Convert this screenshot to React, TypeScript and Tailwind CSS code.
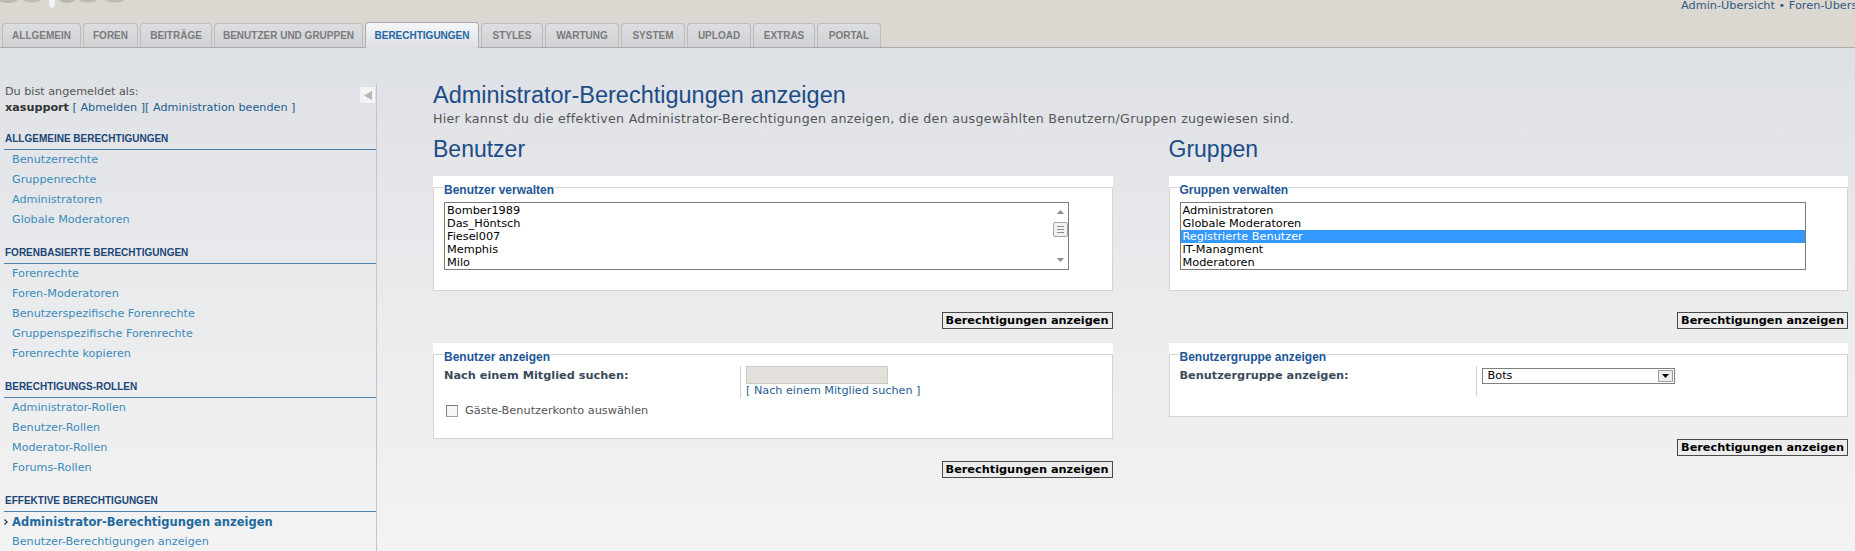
import React from "react";

const tabs: { label: string; w: string; active?: boolean }[] = [
  { label: "ALLGEMEIN", w: "w-[79px]" },
  { label: "FOREN", w: "w-[55px]" },
  { label: "BEITRÄGE", w: "w-[72px]" },
  { label: "BENUTZER UND GRUPPEN", w: "w-[149px]" },
  { label: "BERECHTIGUNGEN", w: "w-[114px]", active: true },
  { label: "STYLES", w: "w-[62px]" },
  { label: "WARTUNG", w: "w-[74px]" },
  { label: "SYSTEM", w: "w-[64px]" },
  { label: "UPLOAD", w: "w-[64px]" },
  { label: "EXTRAS", w: "w-[62px]" },
  { label: "PORTAL", w: "w-[64px]" },
];

const sections: { title: string; links: string[]; active?: number }[] = [
  {
    title: "ALLGEMEINE BERECHTIGUNGEN",
    links: ["Benutzerrechte", "Gruppenrechte", "Administratoren", "Globale Moderatoren"],
  },
  {
    title: "FORENBASIERTE BERECHTIGUNGEN",
    links: [
      "Forenrechte",
      "Foren-Moderatoren",
      "Benutzerspezifische Forenrechte",
      "Gruppenspezifische Forenrechte",
      "Forenrechte kopieren",
    ],
  },
  {
    title: "BERECHTIGUNGS-ROLLEN",
    links: ["Administrator-Rollen", "Benutzer-Rollen", "Moderator-Rollen", "Forums-Rollen"],
  },
  {
    title: "EFFEKTIVE BERECHTIGUNGEN",
    links: ["Administrator-Berechtigungen anzeigen", "Benutzer-Berechtigungen anzeigen"],
    active: 0,
  },
];

function Panel({ legend, children }: { legend: string; children: React.ReactNode }) {
  return (
    <div className="bg-white">
      <fieldset className="border border-[#d4d4d4] px-[10px] pb-[20px]">
        <legend className="pt-[6px] leading-[16px] text-[12px] font-bold text-[#1d5597] font-['Liberation_Sans',sans-serif]">
          {legend}
        </legend>
        {children}
      </fieldset>
    </div>
  );
}

function SubmitButton() {
  return (
    <div className="flex justify-end">
      <button className="h-[17px] px-[3px] border border-[#4a4a4a] bg-[#ececec] text-[11.3px] leading-[15px] font-bold text-black">
        Berechtigungen anzeigen
      </button>
    </div>
  );
}

function Scrollbar() {
  return (
    <div className="w-[16px] flex flex-col items-center py-px">
      <div className="h-[16px] w-full flex items-center justify-center">
        <svg width="7" height="4" viewBox="0 0 7 4">
          <path d="M0 4 L3.5 0 L7 4 Z" fill="#8c8c8c" />
        </svg>
      </div>
      <div className="mt-[2px] h-[15px] w-[15px] rounded-[2px] border border-[#a3a3a3] bg-[#f1f1f1] flex flex-col items-center justify-center gap-[2px]">
        <div className="h-px w-[7px] bg-[#8f8f8f]" />
        <div className="h-px w-[7px] bg-[#8f8f8f]" />
        <div className="h-px w-[7px] bg-[#8f8f8f]" />
      </div>
      <div className="flex-1" />
      <div className="h-[16px] w-full flex items-center justify-center">
        <svg width="7" height="4" viewBox="0 0 7 4">
          <path d="M0 0 L3.5 4 L7 0 Z" fill="#8c8c8c" />
        </svg>
      </div>
    </div>
  );
}

export default function App() {
  return (
    <div className="w-[1855px] h-[551px] overflow-hidden font-['DejaVu_Sans',sans-serif] text-[#333]">
      {/* Header */}
      <header className="h-[48px] bg-[#dbd8d1] border-b border-[#a9a9a9] flex flex-col">
        <div className="h-[23px] flex">
          <div className="w-[1681px] shrink-0">
            <svg width="130" height="10" viewBox="0 0 130 10">
              <ellipse cx="8" cy="-1" rx="10" ry="4" fill="#b9b7b1" />
              <ellipse cx="32" cy="-1" rx="9" ry="3.5" fill="#bdbbb5" />
              <path d="M49 0 L55 0 L55 6 Q52 10 49 6 Z" fill="#f2f3f5" />
              <ellipse cx="67" cy="-1" rx="8" ry="4" fill="#b9b7b1" />
              <ellipse cx="88" cy="-1" rx="9" ry="3.5" fill="#bcbab4" />
              <ellipse cx="115" cy="-1" rx="10" ry="3.5" fill="#bdbbb5" />
            </svg>
          </div>
          <div className="whitespace-nowrap text-[11.3px] leading-[12px] text-[#34587f]">
            Admin-Übersicht • Foren-Übersicht
          </div>
        </div>
        <nav className="h-[24px] flex items-end gap-[2px] pl-[2px] font-['Liberation_Sans',sans-serif] text-[10px] font-bold">
          {tabs.map((t) =>
            t.active ? (
              <div
                key={t.label}
                className={`${t.w} h-[26px] -mb-px relative flex items-center justify-center pb-px rounded-t-[4px] border border-b-0 border-[#abadb0] bg-linear-to-b from-[#f5f6f7] to-[#dde0e5] text-[#2467a3]`}
              >
                {t.label}
              </div>
            ) : (
              <div
                key={t.label}
                className={`${t.w} h-[24px] flex items-center justify-center rounded-t-[4px] border border-b-0 border-[#babcbf] bg-linear-to-b from-[#dcdee1] to-[#cfd1d5] text-[#7b7b7b]`}
              >
                {t.label}
              </div>
            )
          )}
        </nav>
      </header>

      {/* Body */}
      <div className="h-[503px] flex bg-linear-to-b from-[#dde0e5] via-[#e9eaec] via-45% to-[#f3f3f3]">
        {/* Sidebar */}
        <aside className="w-[377px] shrink-0 pt-[36px] flex flex-col">
          <div className="relative flex-1 border-r border-[#c3c5c8]">
            <div className="absolute right-px top-[3px] w-[15px] h-[16px] bg-[#f4f4f4] flex items-center justify-center">
              <svg width="8" height="9" viewBox="0 0 8 9">
                <path d="M8 0 L0 4.5 L8 9 Z" fill="#b4b4b4" />
              </svg>
            </div>
            <div className="px-[5px] text-[11.2px] leading-[16px] text-[#555]">
              <div>Du bist angemeldet als:</div>
              <div>
                <b className="text-[#333]">xasupport</b>{" "}
                <span className="text-[#1f5e8f]">[ Abmelden ]</span>
                <span className="text-[#1f5e8f]">[ Administration beenden ]</span>
              </div>
            </div>
            {sections.map((s) => (
              <div key={s.title} className="mt-[15px]">
                <div className="ml-[4px] pl-px pb-[2px] border-b border-[#4f80ad] leading-[16px] text-[10px] font-bold text-[#1b4677] font-['Liberation_Sans',sans-serif]">
                  {s.title}
                </div>
                {s.links.map((l, i) =>
                  s.active === i ? (
                    <div key={l} className="relative pl-[12px] leading-[20px] text-[11.5px] font-bold text-[#1f6a9e]">
                      <svg className="absolute left-[4px] top-[7px]" width="4" height="6" viewBox="0 0 4 6">
                        <path d="M0.5 0.5 L3.2 3 L0.5 5.5" stroke="#333" strokeWidth="1.2" fill="none" />
                      </svg>
                      {l}
                    </div>
                  ) : (
                    <div key={l} className="pl-[12px] leading-[20px] text-[11.2px] text-[#3b8bbb]">
                      {l}
                    </div>
                  )
                )}
              </div>
            ))}
          </div>
        </aside>

        {/* Main */}
        <main className="flex-1 pl-[56px] pr-[7px] pt-[34px]">
          <h1 className="font-['Liberation_Sans',sans-serif] text-[23.5px] leading-[26px] text-[#1b4c86]">
            Administrator-Berechtigungen anzeigen
          </h1>
          <p className="mt-[4px] text-[12.6px] leading-[14px] tracking-[0.3px] text-[#555]">
            Hier kannst du die effektiven Administrator-Berechtigungen anzeigen, die den ausgewählten Benutzern/Gruppen zugewiesen sind.
          </p>
          <div className="mt-[10px] grid grid-cols-2 gap-x-[56px]">
            {/* Benutzer */}
            <div className="flex flex-col">
              <h2 className="font-['Liberation_Sans',sans-serif] text-[23px] leading-[26px] text-[#1b4c86]">
                Benutzer
              </h2>
              <div className="mt-[14px]">
                <Panel legend="Benutzer verwalten">
                  <div className="mt-[4px] w-[625px] h-[68px] border border-[#7c7c7c] bg-white flex">
                    <div className="flex-1 pt-px text-[11.3px] leading-[13px] text-black">
                      {["Bomber1989", "Das_Höntsch", "Fiesel007", "Memphis", "Milo"].map((n) => (
                        <div key={n} className="pl-[2px]">
                          {n}
                        </div>
                      ))}
                    </div>
                    <Scrollbar />
                  </div>
                </Panel>
              </div>
              <div className="mt-[21px]">
                <SubmitButton />
              </div>
              <div className="mt-[14px]">
                <Panel legend="Benutzer anzeigen">
                  <div className="mt-px flex">
                    <div className="w-[296px] pt-[3px] leading-[14px] text-[11.3px] font-bold text-[#3b4a5c]">
                      Nach einem Mitglied suchen:
                    </div>
                    <div className="border-l border-[#d0d0d0] pl-[5px]">
                      <div className="w-[142px] h-[18px] bg-[#e3dfda] border border-[#cdc9c3]" />
                      <div className="leading-[14px] text-[11.2px] text-[#1f5e8f]">[ Nach einem Mitglied suchen ]</div>
                    </div>
                  </div>
                  <div className="mt-[6px] flex items-center gap-[7px] pl-[2px] h-[14px]">
                    <div className="w-[12px] h-[12px] border border-[#a5a5a5] border-t-[#7d7d7d] border-l-[#7d7d7d] bg-[#f7f7f7]" />
                    <span className="text-[11.3px] leading-[14px] text-[#555]">Gäste-Benutzerkonto auswählen</span>
                  </div>
                </Panel>
              </div>
              <div className="mt-[22px]">
                <SubmitButton />
              </div>
            </div>

            {/* Gruppen */}
            <div className="flex flex-col">
              <h2 className="font-['Liberation_Sans',sans-serif] text-[23px] leading-[26px] text-[#1b4c86]">
                Gruppen
              </h2>
              <div className="mt-[14px]">
                <Panel legend="Gruppen verwalten">
                  <div className="mt-[4px] w-[626px] h-[68px] border border-[#7c7c7c] bg-white pt-px text-[11.3px] leading-[13px] text-black">
                    {["Administratoren", "Globale Moderatoren", "Registrierte Benutzer", "IT-Managment", "Moderatoren"].map(
                      (n) =>
                        n === "Registrierte Benutzer" ? (
                          <div key={n} className="pl-[2px] bg-[#3399ff] text-white">
                            {n}
                          </div>
                        ) : (
                          <div key={n} className="pl-[2px]">
                            {n}
                          </div>
                        )
                    )}
                  </div>
                </Panel>
              </div>
              <div className="mt-[21px]">
                <SubmitButton />
              </div>
              <div className="mt-[14px]">
                <Panel legend="Benutzergruppe anzeigen">
                  <div className="mt-px flex">
                    <div className="w-[296px] pt-[3px] leading-[14px] text-[11.3px] font-bold text-[#3b4a5c]">
                      Benutzergruppe anzeigen:
                    </div>
                    <div className="h-[30px] border-l border-[#d0d0d0] pl-[5px]">
                      <div className="mt-[2px] w-[193px] h-[16px] border border-[#7f7f7f] bg-white flex items-center">
                        <span className="flex-1 pl-[5px] text-[11.3px] leading-[14px] text-black">Bots</span>
                        <div className="mr-px w-[15px] h-[12px] bg-[#ececec] border border-[#a0a0a0] flex items-center justify-center">
                          <svg width="7" height="4" viewBox="0 0 7 4">
                            <path d="M0 0 L3.5 4 L7 0 Z" fill="#000" />
                          </svg>
                        </div>
                      </div>
                    </div>
                  </div>
                </Panel>
              </div>
              <div className="mt-[22px]">
                <SubmitButton />
              </div>
            </div>
          </div>
        </main>
      </div>
    </div>
  );
}
